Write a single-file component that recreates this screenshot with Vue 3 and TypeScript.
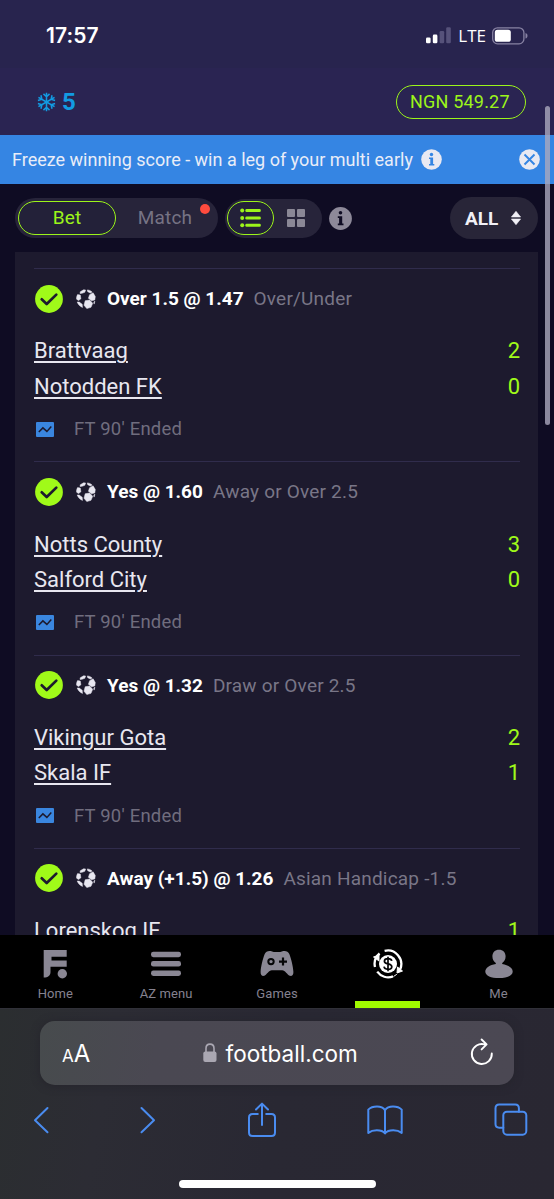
<script setup lang="ts">
interface Selection {
  pick: string
  market: string
  home: string
  away: string
  homeScore: number
  awayScore: number
}

const selections: Selection[] = [
  { pick: 'Over 1.5 @ 1.47', market: 'Over/Under', home: 'Brattvaag', away: 'Notodden FK', homeScore: 2, awayScore: 0 },
  { pick: 'Yes @ 1.60', market: 'Away or Over 2.5', home: 'Notts County', away: 'Salford City', homeScore: 3, awayScore: 0 },
  { pick: 'Yes @ 1.32', market: 'Draw or Over 2.5', home: 'Vikingur Gota', away: 'Skala IF', homeScore: 2, awayScore: 1 },
  { pick: 'Away (+1.5) @ 1.26', market: 'Asian Handicap -1.5', home: 'Lorenskog IF', away: '', homeScore: 1, awayScore: 0 },
]
</script>

<template>
  <div class="screen">
    <header class="status">
      <span class="clock">17:57</span>
      <div class="status-right">
        <svg class="signal" width="25" height="17" viewBox="0 0 25 17">
          <rect x="0" y="10.5" width="4.6" height="5.8" rx="1.3" fill="#fff" />
          <rect x="6.8" y="7.6" width="4.6" height="8.7" rx="1.3" fill="#fff" />
          <rect x="13.6" y="4" width="4.6" height="12.3" rx="1.3" fill="#56527a" />
          <rect x="20.2" y="0.3" width="4.6" height="16" rx="1.3" fill="#56527a" />
        </svg>
        <span class="lte">LTE</span>
        <svg class="battery" width="36" height="18" viewBox="0 0 36 18">
          <rect x="0.7" y="0.8" width="31.2" height="16" rx="4.8" fill="none" stroke="#8782a3" stroke-width="1.3" />
          <rect x="2.8" y="2.8" width="16" height="12" rx="2.6" fill="#fff" />
          <path d="M33.5 6v5.6c1.3-.4 2-1.500 2-2.800s-.7-2.400-2-2.800z" fill="#8782a3" />
        </svg>
      </div>
    </header>

    <div class="account">
      <div class="freeze">
        <svg width="19" height="20" viewBox="-10 -10 20 20" fill="none" stroke="#129be2" stroke-width="1.6">
          <g v-for="a in 6" :key="a" :transform="`rotate(${a * 60})`">
            <path d="M0 0V-9.800M-3.200-8.600L0-5.600L3.200-8.600" />
          </g>
          <circle r="1.6" fill="#129be2" stroke="none" />
        </svg>
        <span>5</span>
      </div>
      <div class="balance">NGN 549.27</div>
    </div>

    <div class="banner">
      <span class="banner-text">Freeze winning score - win a leg of your multi early</span>
      <svg class="banner-info" width="21" height="21" viewBox="0 0 21 21">
        <circle cx="10.500" cy="10.500" r="10.300" fill="#e9e9f2" />
        <circle cx="10.500" cy="5.500" r="1.700" fill="#3585e3" />
        <path d="M8 8.500h4.100v6.500h1.200v1.600H8V15h1.300v-5H8z" fill="#3585e3" />
      </svg>
      <svg class="banner-close" width="21" height="21" viewBox="0 0 21 21">
        <circle cx="10.500" cy="10.500" r="10.300" fill="#e9e9f2" />
        <path d="M5.500 5.500l10 10M15.500 5.500l-10 10" stroke="#3585e3" stroke-width="1.900" />
      </svg>
    </div>

    <main class="content">
      <div class="toolbar">
        <div class="tabs">
          <span class="tab active">Bet</span>
          <span class="tab match">Match<i class="dot"></i></span>
        </div>
        <div class="views">
          <span class="view active">
            <svg width="21" height="20" viewBox="0 0 21 20" fill="#9cf51a">
              <g v-for="y in [2.500, 10, 17.300]" :key="y">
                <circle cx="2.200" :cy="y" r="2" />
                <rect x="5.300" :y="y - 1.500" width="15.500" height="3" rx="1.300" />
              </g>
            </svg>
          </span>
          <svg class="grid-icon" width="18" height="18" viewBox="0 0 18 18" fill="#8b8896">
            <rect width="8" height="8" rx="1" /><rect x="10" width="8" height="8" rx="1" />
            <rect y="10" width="8" height="8" rx="1" /><rect x="10" y="10" width="8" height="8" rx="1" />
          </svg>
        </div>
        <svg class="info" width="23" height="23" viewBox="0 0 23 23">
          <circle cx="11.500" cy="11.500" r="11.400" fill="#8d8999" />
          <circle cx="11.500" cy="5.700" r="1.800" fill="#0f0c23" />
          <path d="M8.800 9.200h4.400v7.300h1.300v1.700H8.800v-1.700h1.300v-5.600H8.800z" fill="#0f0c23" />
        </svg>
        <div class="filter">
          <span>ALL</span>
          <svg width="10" height="14" viewBox="0 0 10 14" fill="#f1f0f6">
            <path d="M5 0.300L9.600 6H.4zM5 13.700L9.600 8H.4z" stroke="#f1f0f6" stroke-width=".6" stroke-linejoin="round" />
          </svg>
        </div>
      </div>

      <section class="panel">
        <article v-for="s in selections" :key="s.home" class="bet">
          <div class="pick">
            <svg class="check" width="28" height="28" viewBox="0 0 28 28">
              <circle cx="14" cy="14" r="13.900" fill="#a0fa19" />
              <path d="M6.700 14.300l5 4.700 9.600-9.400" fill="none" stroke="#1d1a2e" stroke-width="2.700" stroke-linecap="round" stroke-linejoin="round" />
            </svg>
            <svg class="ball" width="20" height="20" viewBox="0 0 20 20" fill="#e8e7f1">
              <path d="M4.300 2.700L7.600.8l2 .2-.8 2.300-2.800 1-2 .1zM11.300.9c2.100.2 3.700.9 4.800 2.200L14.300 4l-2.600-1.300zM13.600 5.700l3.500-1.900 2.200 3.800-.5 3.300-3.300.8-3.100-2.400zM1.600 5.600l2.700.5.600 3.700-2.400 1.700-1.900-1.300C.4 8.400.8 7 1.600 5.600zM1.200 13l2 .1 3 2.100.3 3.200c-2.600-1-4.400-2.900-5.300-5.400zM9.200 11.700l4.400-.6 3.100 3.200-1.700 4-4.200 1.300-2.800-3.400zM17.800 13l1.100-.7-.8 2.800z" stroke="#e8e7f1" stroke-width=".5" stroke-linejoin="round" />
            </svg>
            <strong>{{ s.pick }}</strong>
            <span class="market">{{ s.market }}</span>
          </div>
          <div class="team"><span class="name">{{ s.home }}</span><span class="score">{{ s.homeScore }}</span></div>
          <div class="team"><span class="name">{{ s.away }}</span><span class="score">{{ s.awayScore }}</span></div>
          <div class="state">
            <svg width="18" height="15" viewBox="0 0 18 15">
              <rect width="18" height="15" rx="1" fill="#3a86df" />
              <path d="M2.800 10l4.100-4.100 4 3.500 4.400-4.800" fill="none" stroke="#1d1a2e" stroke-width="1.500" />
            </svg>
            <span>FT 90' Ended</span>
          </div>
        </article>
      </section>
    </main>

    <nav class="tabbar">
      <div class="item">
        <svg width="30" height="30" viewBox="0 0 30 30" fill="#8a8794">
          <path d="M3.700 1h23v6.700H11.500v3.800h15.200v6.300H10.500V23c0 3.500-2.300 5.500-6.800 5.500z" />
          <circle cx="22.300" cy="24.800" r="4.700" />
        </svg>
        <span>Home</span>
      </div>
      <div class="item">
        <svg width="30" height="30" viewBox="0 0 30 30" fill="#8a8794">
          <rect y="2.700" width="30" height="5.500" rx="2.400" /><rect y="12.100" width="30" height="5.500" rx="2.400" /><rect y="21.500" width="30" height="5.500" rx="2.400" />
        </svg>
        <span>AZ menu</span>
      </div>
      <div class="item">
        <svg width="34" height="30" viewBox="0 0 34 30">
          <path d="M4.700 5C5.700 2.600 8 1.600 10.600 2c1.400.2 1.800.9 3.200.9h6.400c1.400 0 1.800-.7 3.200-.9 2.600-.4 4.900.6 5.900 3 2 4.900 3.900 13 4.100 18 .1 2.900-1.600 4.500-3.700 3.800-2.500-.9-4.300-5.500-7.600-5.500H11.900c-3.300 0-5.100 4.600-7.600 5.500C2.200 27.500.5 25.900.6 23 .8 18 2.700 9.900 4.700 5z" fill="#8a8794" />
          <circle cx="11" cy="12.600" r="2.700" fill="none" stroke="#050507" stroke-width="2" />
          <path d="M23 8.600v8M19 12.600h8" stroke="#050507" stroke-width="2.200" />
        </svg>
        <span>Games</span>
      </div>
      <div class="item current">
        <svg width="32" height="30" viewBox="0 0 32 30" fill="none" stroke="#fff">
          <path d="M12.600 1.900A13.500 13.500 0 0 1 28.300 20M7.600 4.500A13.500 13.500 0 0 0 3 18M5.200 22.700A13.500 13.500 0 0 0 21 27.400" stroke-width="2.300" />
          <path d="M1.500 8l5.500-2v6zM30.500 22l-5.500 2 .5-6zM24.800 25.300l-3.300 2.200" fill="#fff" stroke-width="1" />
          <circle cx="16" cy="15" r="9" fill="#fff" stroke="none" />
          <path d="M19.800 11.900c-.4-1.500-1.700-2.200-3.800-2.200-2.300 0-3.600.9-3.600 2.500 0 3.700 7.400 1.700 7.400 5.500 0 1.700-1.500 2.600-3.800 2.600-2.200 0-3.700-.9-4-2.600M16 7.800v14.400" stroke="#050507" stroke-width="1.700" />
        </svg>
        <i class="marker"></i>
      </div>
      <div class="item">
        <svg width="30" height="30" viewBox="0 0 30 30" fill="#8a8794">
          <path d="M15 .7c3.900 0 6.600 2.700 6.600 6.600 0 3-1.300 5.400-3.400 6.600v1c6 .9 10.500 4 10.500 7.500 0 4.300-5.800 6.600-13.700 6.600S1.300 26.700 1.300 22.400c0-3.500 4.500-6.600 10.500-7.500v-1C9.700 12.700 8.400 10.300 8.400 7.300 8.400 3.400 11.100.7 15 .7z" />
        </svg>
        <span>Me</span>
      </div>
    </nav>

    <footer class="browser">
      <div class="address">
        <span class="reader"><small>A</small>A</span>
        <div class="domain">
          <svg width="14" height="20" viewBox="0 0 14 20">
            <path d="M3 9V5.400C3 2.900 4.500 1.100 7 1.100s4 1.800 4 4.300V9" fill="none" stroke="#aaa7b2" stroke-width="1.600" />
            <rect x=".3" y="8.400" width="13.200" height="10.600" rx="2" fill="#aaa7b2" />
          </svg>
          <span>football.com</span>
        </div>
        <svg class="reload" width="24" height="28" viewBox="0 0 24 28" fill="none" stroke="#fff" stroke-width="1.900" stroke-linecap="round" stroke-linejoin="round">
          <path d="M14.700 6.400A10 10 0 1 0 21.800 15.500M11.600 1.500l5 4.900-5 5" />
        </svg>
      </div>
      <div class="actions">
        <svg width="16" height="28" viewBox="0 0 16 28"><path d="M14.500 2L2 14.200l12.500 12" /></svg>
        <svg width="16" height="28" viewBox="0 0 16 28"><path d="M1.500 2L14 14.200l-12.500 12" /></svg>
        <svg width="28" height="36" viewBox="0 0 28 36"><path d="M9.800 12H4.600C2.400 12 1 13.200 1 15.500v15C1 32.700 2.400 34 4.600 34h18.800c2.200 0 3.600-1.300 3.600-3.500v-15c0-2.300-1.400-3.500-3.600-3.500h-5.200M14 23V1.800M8 7.500l6-5.900 6 5.900" /></svg>
        <svg width="36" height="30" viewBox="0 0 36 30"><path d="M18 5.200C16.300 2.600 13.700 1.500 10 1.500S3.300 2.600 1.300 4.600v23.300c2.200-1.700 5-2.600 8.500-2.600s6.400.9 8.200 3.100c1.800-2.200 4.700-3.100 8.200-3.100s6.300.9 8.500 2.600V4.600c-2-2-5-3.100-8.700-3.100S19.700 2.600 18 5.200zM18 5.200v23" /></svg>
        <svg width="34" height="34" viewBox="0 0 34 34"><rect x="9.300" y="8.700" width="23" height="23" rx="3.600" /><path d="M9.300 24.700H5.200c-2.300 0-3.700-1.300-3.700-3.600V5.200c0-2.300 1.400-3.700 3.700-3.700h16c2.300 0 3.700 1.400 3.700 3.700v3.500" /></svg>
      </div>
      <i class="home-indicator"></i>
    </footer>
    <i class="scrollbar"></i>
  </div>
</template>

<style>
body { margin: 0; background: #0f0c23; }
</style>

<style scoped>
.screen { position: relative; width: 554px; height: 1199px; overflow: hidden; display: flex; flex-direction: column; background: #0f0c23; font-family: Roboto, "Liberation Sans", sans-serif; color: #f1f0f6; }
.screen * { box-sizing: border-box; }
svg { display: block; flex: none; }
.status { height: 68px; flex: none; display: flex; justify-content: space-between; align-items: center; padding: 3px 26px 0 46px; background: #28244e; font-family: Inter, sans-serif; }
.clock { font-size: 21px; font-weight: 600; letter-spacing: .1px; color: #fff; }
.status-right { display: flex; align-items: center; }
.lte { font-size: 17px; font-weight: 500; margin: 0 6px 0 7px; color: #fff; font-family: "Open Sans", sans-serif; }
.account { height: 67px; flex: none; display: flex; justify-content: space-between; align-items: center; padding: 0 28px 0 37px; background: #2a2452; }
.freeze { display: flex; align-items: center; gap: 6px; color: #129be2; font-size: 24px; font-weight: 700; }
.balance { width: 130px; height: 34px; border: 1.500px solid #9cf51a; border-radius: 17px; color: #9cf51a; font-size: 18px; letter-spacing: .2px; line-height: 31px; padding-left: 13px; white-space: nowrap; }
.banner { height: 49px; flex: none; display: flex; align-items: center; padding: 0 14px 0 12px; background: #3585e3; font-size: 18px; white-space: nowrap; color: #e9edf8; }
.banner-info { margin-left: 8px; }
.banner-close { margin-left: auto; }
.content { height: 751px; flex: none; overflow: hidden; padding: 0 16px 0 15px; }
.toolbar { height: 68px; display: flex; align-items: center; }
.tabs { width: 203px; height: 40px; border-radius: 20px; background: #27243a; display: flex; align-items: center; padding-left: 3px; }
.tab { width: 98px; height: 34px; line-height: 31px; text-align: center; font-size: 19px; letter-spacing: .2px; color: #767384; border: 1.500px solid transparent; position: relative; }
.tab.active { border-color: #9cf51a; border-radius: 17px; color: #9cf51a; background: #232139; }
.dot { position: absolute; width: 10px; height: 10px; border-radius: 5px; background: #ff4b3e; right: 3px; top: 2px; }
.views { width: 97px; height: 39px; margin-left: 7px; border-radius: 20px; background: #27243a; display: flex; align-items: center; padding-left: 1.500px; }
.view.active { width: 47px; height: 34px; border: 1.500px solid #9cf51a; border-radius: 17px; display: flex; align-items: center; justify-content: center; background: #232139; }
.grid-icon { margin-left: 13px; }
.info { margin-left: 7px; }
.filter { margin-left: auto; width: 88px; height: 42px; border-radius: 21px; background: #282538; display: flex; align-items: center; padding-left: 15px; gap: 13px; font-size: 19px; font-weight: 700; }
.panel { height: 683px; background: #1d1a2e; padding: 16px 18px 0 19px; overflow: hidden; }
.bet { height: 193.300px; border-top: 1.500px solid #302c4c; }
.pick { height: 58px; display: flex; align-items: center; white-space: nowrap; font-size: 19px; padding-top: 1px; }
.check { margin-left: 1px; }
.ball { margin: 0 11px 0 13px; }
.pick strong { font-weight: 700; color: #fff; }
.market { margin-left: 10px; color: #797687; letter-spacing: .2px; }
.team { height: 35.500px; display: flex; justify-content: space-between; align-items: center; padding-top: 12px; font-size: 22px; box-sizing: content-box; height: 23.500px; color: #e8e7f0; }
.name { text-decoration: underline; text-decoration-thickness: 1.500px; text-underline-offset: 3px; }
.score { color: #a0fa19; font-size: 22px; }
.state { display: flex; align-items: center; gap: 20px; margin-top: 19px; padding-left: 2px; font-size: 18.500px; letter-spacing: .2px; color: #706d7e; height: 24px; }
.tabbar { height: 73px; flex: none; background: #000; display: flex; }
.item { width: 110.800px; flex: none; position: relative; display: flex; flex-direction: column; align-items: center; padding-top: 14px; color: #858290; }
.item span { font-size: 13px; line-height: 18px; margin-top: 6px; letter-spacing: .1px; }
.marker { position: absolute; width: 65px; height: 7px; bottom: 0; left: 23px; background: #a0fa00; }
.browser { height: 191px; flex: none; background: linear-gradient(100deg, #2b2e30 0, #2c2c34 20%, #292833 50%, #292732 100%); padding: 12px 26px 0 31px; border-top: 1px solid #303038; position: relative; font-family: Inter, sans-serif; }
.address { height: 64px; margin: 0 14px 0 9px; width: 474px; border-radius: 15px; background: linear-gradient(100deg, #474b4d, #4a4852 25%, #4b4853); box-shadow: 0 1px 8px #25242c; display: flex; align-items: center; justify-content: space-between; padding: 0 20px 0 22px; color: #fff; }
.reader { font-size: 24px; } .reader small { font-size: 17px; }
.domain { display: flex; align-items: center; gap: 9px; font-size: 22.500px; margin-left: 0; }
.reload { margin-top: -3px; }
.actions { display: flex; align-items: center; justify-content: space-between; height: 40px; margin: 15px 0 0 2px; }
.actions svg { fill: none; stroke: #4a8cf0; stroke-width: 2; stroke-linecap: round; stroke-linejoin: round; }
.home-indicator { position: absolute; left: 179px; bottom: 11px; width: 197px; height: 8px; border-radius: 4px; background: #fff; }
.scrollbar { position: absolute; left: 545px; top: 106px; width: 5px; height: 319px; border-radius: 3px; background: #aaa8bdcc; }
</style>
